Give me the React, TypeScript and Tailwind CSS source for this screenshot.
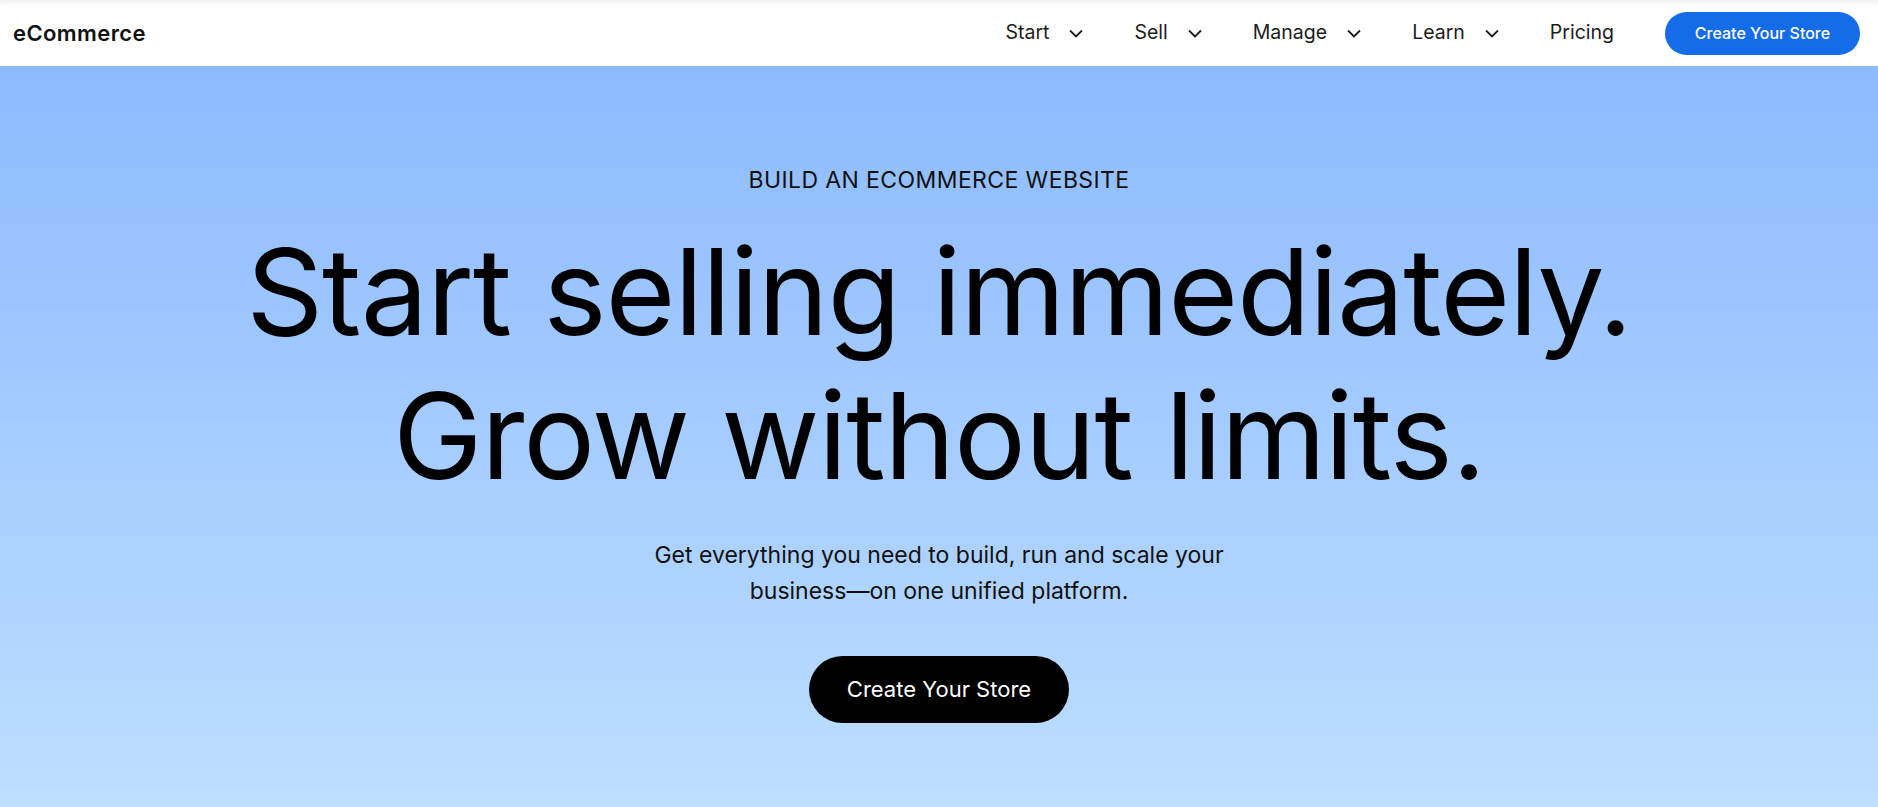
const NAV = [
  { label: "Start", menu: true },
  { label: "Sell", menu: true },
  { label: "Manage", menu: true },
  { label: "Learn", menu: true },
  { label: "Pricing", menu: false },
];

function Chevron() {
  return (
    <svg width="14" height="9" viewBox="0 0 14 9" fill="none" aria-hidden="true">
      <path d="M1 1.5l6 6 6-6" stroke="currentColor" strokeWidth="1.8" />
    </svg>
  );
}

function Header() {
  return (
    <header className="flex h-[66px] items-center justify-between bg-white pl-[13px] pr-[18px] shadow-[inset_0_7px_6px_-5px_rgba(0,0,0,0.07)]">
      <span className="text-[22px] font-semibold tracking-[0.4px] text-[#111]">
        eCommerce
      </span>
      <nav className="flex items-center gap-[51px]">
        {NAV.map((item) => (
          <a
            key={item.label}
            className="flex cursor-pointer items-center gap-[20px] text-[19.5px] text-[#1c1c1c]"
          >
            {item.label}
            {item.menu && <Chevron />}
          </a>
        ))}
        <button className="h-[43px] w-[195px] rounded-full bg-[#146ce8] text-[16px] font-medium text-white">
          Create Your Store
        </button>
      </nav>
    </header>
  );
}

export default function App() {
  return (
    <div className="min-h-[807px] font-['Inter',sans-serif]">
      <Header />
      <section className="flex h-[741px] flex-col items-center bg-gradient-to-b from-[#8dbafe] to-[#bddeff] pt-[100px] text-center text-black">
        <p className="text-[23px] leading-[28px] tracking-[0.4px] text-[#111]">
          BUILD AN ECOMMERCE WEBSITE
        </p>
        <h1 className="mt-[26px] text-[120px] font-normal leading-[144px] tracking-[-1.2px]">
          Start selling immediately.
          <br />
          Grow without limits.
        </h1>
        <p className="mt-[29px] text-[23px] leading-[36px] text-[#111]">
          Get everything you need to build, run and scale your
          <br />
          business—on one unified platform.
        </p>
        <button className="mt-[47px] h-[67px] w-[260px] rounded-full bg-black text-[22px] text-white">
          Create Your Store
        </button>
      </section>
    </div>
  );
}
